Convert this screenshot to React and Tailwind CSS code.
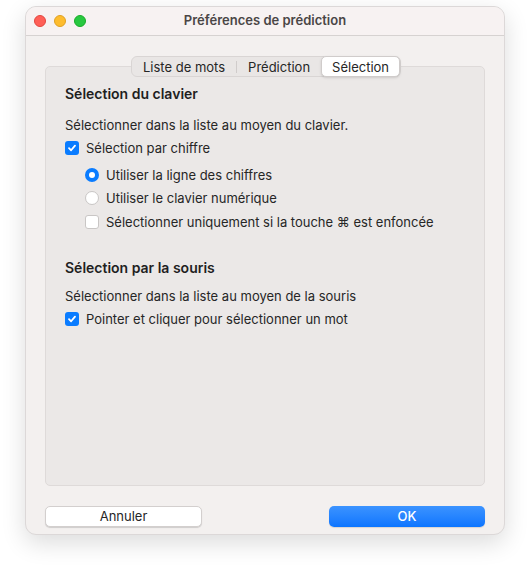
import React from 'react';

const font = { fontFamily: 'Inter, "Noto Sans", sans-serif' };

function Check({ checked }) {
  if (checked) {
    return (
      <span className="flex h-[14px] w-[14px] shrink-0 items-center justify-center rounded-[3px] bg-[#0a7cff]">
        <svg width="10" height="10" viewBox="0 0 10 10">
          <path d="M2 5.2 L4.1 7.3 L8 2.6" fill="none" stroke="white" strokeWidth="1.8" strokeLinecap="round" strokeLinejoin="round" />
        </svg>
      </span>
    );
  }
  return <span className="h-[14px] w-[14px] shrink-0 rounded-[3px] border border-[#c9c6c5] bg-white" />;
}

function Radio({ checked }) {
  if (checked) {
    return (
      <span className="flex h-[14px] w-[14px] shrink-0 items-center justify-center rounded-full bg-[#0a7cff]">
        <span className="h-[6px] w-[6px] rounded-full bg-white" />
      </span>
    );
  }
  return <span className="h-[14px] w-[14px] shrink-0 rounded-full border border-[#c9c6c5] bg-white" />;
}

export default function App() {
  return (
    <div className="h-[578px] w-[530px] bg-white pt-[6px] pl-[25px] text-[#262626]" style={font}>
      <div className="flex h-[529px] w-[480px] flex-col overflow-hidden rounded-[11px] border border-[#dcd8d8] bg-[#f3f0ef] shadow-[0_8px_24px_rgba(0,0,0,0.14)]">
        <div className="relative flex h-[29px] shrink-0 items-center border-b border-[#d6d2d1] bg-[#f7f2f2]">
          <div className="absolute left-[8px] top-[8px] flex gap-[8px]">
            <span className="h-[12px] w-[12px] rounded-full bg-[#ff5f57] border border-[#e2463f]" />
            <span className="h-[12px] w-[12px] rounded-full bg-[#febc2e] border border-[#dfa023]" />
            <span className="h-[12px] w-[12px] rounded-full bg-[#28c840] border border-[#1aab29]" />
          </div>
          <div className="w-full text-center text-[13px] font-semibold text-[#4a4646]">Préférences de prédiction</div>
        </div>

        <div className="relative mx-[19px] mt-[30px] h-[420px] rounded-[5px] border border-[#dedad9] bg-[#ebe8e7] text-[13px] leading-[16px]">
          <div className="absolute left-[85px] top-[-11px] flex h-[21px] items-center rounded-[6px] border border-[#d9d5d4] bg-[#e9e6e5] text-[#262626]">
            <div className="px-[11px]">Liste de mots</div>
            <div className="h-[12px] w-px bg-[#d0cccb]" />
            <div className="px-[11px]">Prédiction</div>
            <div className="flex h-[21px] items-center rounded-[5px] border border-[#d0cccb] bg-white px-[10px] shadow-sm">Sélection</div>
          </div>

          <div className="px-[19px] pt-[18px]">
            <div className="text-[14px] font-semibold leading-[17px] text-[#1f1f1f]">Sélection du clavier</div>
            <div className="mt-[15px]">Sélectionner dans la liste au moyen du clavier.</div>
            <div className="mt-[7px] flex items-center gap-[7px]">
              <Check checked />
              <span>Sélection par chiffre</span>
            </div>
            <div className="ml-[20px] mt-[11px] flex flex-col gap-[7px]">
              <div className="flex items-center gap-[7px]">
                <Radio checked />
                <span>Utiliser la ligne des chiffres</span>
              </div>
              <div className="flex items-center gap-[7px]">
                <Radio />
                <span>Utiliser le clavier numérique</span>
              </div>
              <div className="mt-[1px] flex items-center gap-[7px]">
                <Check />
                <span>Sélectionner uniquement si la touche ⌘ est enfoncée</span>
              </div>
            </div>

            <div className="mt-[29px] text-[14px] font-semibold leading-[17px] text-[#1f1f1f]">Sélection par la souris</div>
            <div className="mt-[12px]">Sélectionner dans la liste au moyen de la souris</div>
            <div className="mt-[7px] flex items-center gap-[7px]">
              <Check checked />
              <span>Pointer et cliquer pour sélectionner un mot</span>
            </div>
          </div>
        </div>

        <div className="mx-[19px] mt-[20px] flex justify-between">
          <button className="h-[21px] w-[157px] rounded-[5px] border border-[#d3cfce] bg-white text-[13px] text-[#262626] shadow-[0_1px_1px_rgba(0,0,0,0.15)]">
            Annuler
          </button>
          <button className="h-[21px] w-[156px] rounded-[5px] bg-gradient-to-b from-[#3b93ff] to-[#0a75ff] text-[13px] font-medium text-white shadow-[0_1px_1px_rgba(0,0,0,0.12)]">
            OK
          </button>
        </div>
      </div>
    </div>
  );
}
